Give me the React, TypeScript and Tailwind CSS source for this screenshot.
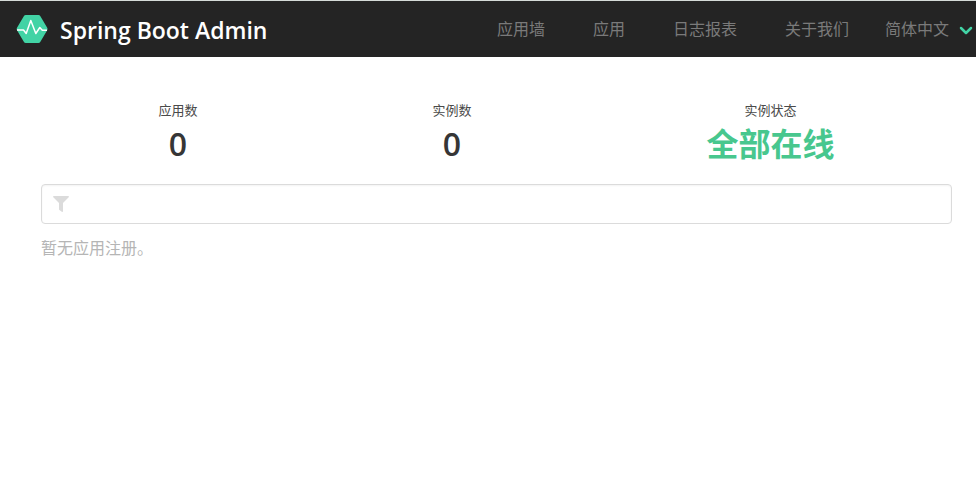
import { ReactNode } from "react";

const navItems = ["应用墙", "应用", "日志报表", "关于我们"];

function Logo() {
  return (
    <svg viewBox="0 0 32 28" className="h-7 w-8 shrink-0" aria-hidden="true">
      <path d="M9.8 0h12.600a2.400 2.400 0 0 1 2 1.200l6.800 11.600a2.400 2.400 0 0 1 0 2.400l-6.800 11.600a2.400 2.400 0 0 1-2 1.200H9.800a2.400 2.400 0 0 1-2-1.200L1 15.200a2.400 2.400 0 0 1 0-2.400L7.800 1.200a2.400 2.400 0 0 1 2-1.200z" fill="#42d3a5" />
      <path d="M1 15h6.500l2.700 3.500 4.600-13 5 13 4-6 2.500 2.700H31" fill="none" stroke="#fff" strokeWidth="1.500" strokeLinejoin="round" />
    </svg>
  );
}

function Stat({ label, children }: { label: string; children: ReactNode }) {
  return (
    <div className="text-center">
      <p className="text-[13px] leading-5 text-[#4a4a4a]">{label}</p>
      {children}
    </div>
  );
}

export default function App() {
  return (
    <div className="min-h-screen bg-white font-['Open_Sans','Noto_Sans_CJK_SC',sans-serif] text-base">
      <header className="flex h-[57px] items-center justify-between border-t border-[#d5dbd8] bg-[#242424] pl-4">
        <a href="#" className="flex items-center gap-3 text-[23px] font-semibold text-white">
          <Logo />
          <span className="pt-0.5">Spring Boot Admin</span>
        </a>
        <nav className="flex items-center">
          {navItems.map((item) => (
            <a key={item} href="#" className="px-6 text-[#7a7a7a]">{item}</a>
          ))}
          <button type="button" className="flex items-center gap-2 pr-px pl-3 text-[#7a7a7a]">
            简体中文
            <svg viewBox="0 0 18 12" className="mt-1 h-3 w-[18px]" aria-hidden="true">
              <path d="M4 3l5 5 5-5" fill="none" stroke="#42d3a5" strokeWidth="2.500" strokeLinecap="round" strokeLinejoin="round" />
            </svg>
          </button>
        </nav>
      </header>
      <main className="pt-[43px] pr-6 pl-[41px]">
        <section className="mb-[17px] flex justify-around">
          <Stat label="应用数">
            <p className="text-[32px] leading-[47px] font-semibold text-[#363636]">0</p>
          </Stat>
          <Stat label="实例数">
            <p className="text-[32px] leading-[47px] font-semibold text-[#363636]">0</p>
          </Stat>
          <Stat label="实例状态">
            <p className="text-[32px] leading-[47px] font-bold text-[#48c78e]">全部在线</p>
          </Stat>
        </section>
        <label className="flex h-10 items-center gap-2 rounded border border-[#dbdbdb] px-[11px] shadow-[inset_0_1px_2px_rgba(10,10,10,0.05)]">
          <svg viewBox="0 0 16 16" className="size-4 shrink-0" aria-hidden="true">
            <path d="M.8 0h14.400c.7 0 1 .8.500 1.300L10 7v8.200c0 .7-.7 1-1.200.6L6.400 14a1 1 0 0 1-.4-.7V7L.3 1.300C-.2.8.1 0 .8 0z" fill="#dbdbdb" />
          </svg>
          <input type="text" aria-label="过滤" className="h-full min-w-0 flex-1 bg-transparent text-[#363636] outline-none" />
        </label>
        <p className="mt-3 text-[#b5b5b5]">暂无应用注册。</p>
      </main>
    </div>
  );
}
